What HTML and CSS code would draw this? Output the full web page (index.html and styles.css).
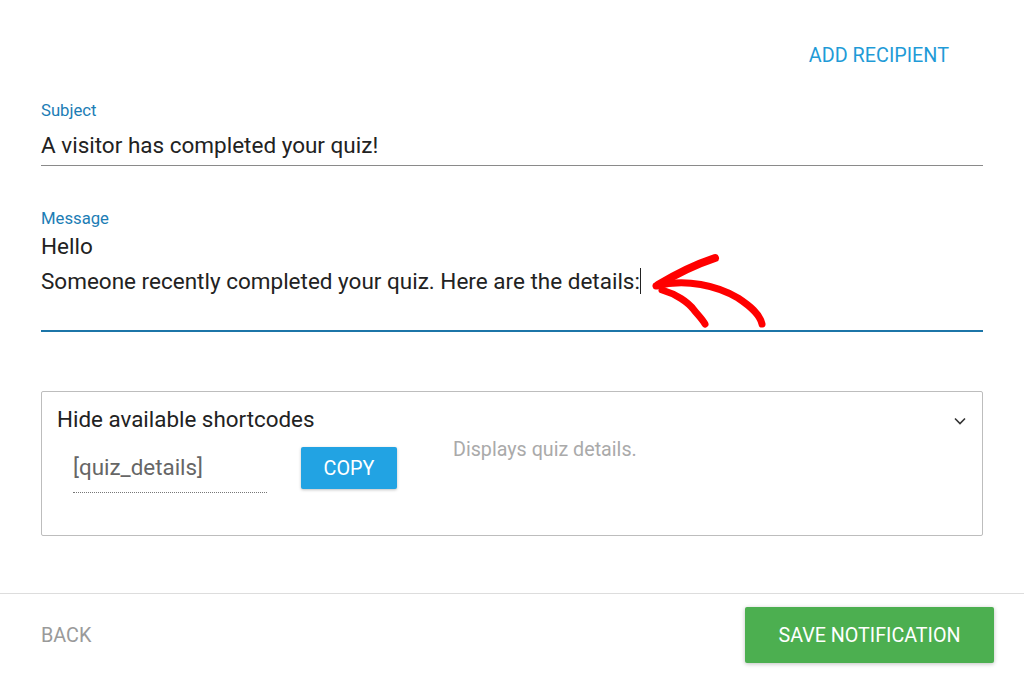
FILE: index.html
```html
<!DOCTYPE html>
<html>
<head>
<meta charset="utf-8">
<link rel="stylesheet" href="styles.css">
</head>
<body>
<div class="page">
  <div class="top-row"><span class="add-recipient">ADD RECIPIENT</span></div>
  <div class="field subject">
    <div class="label">Subject</div>
    <div class="value">A visitor has completed your quiz!</div>
  </div>
  <div class="field message">
    <div class="label">Message</div>
    <div class="value">Hello<br>Someone recently completed your quiz. Here are the details:<span class="caret"></span></div>
    <svg class="arrow" width="140" height="90" viewBox="0 0 140 90">
      <path d="M14 33 C 32 22, 50 13, 71 6" fill="none" stroke="#f00" stroke-width="8" stroke-linecap="round"/>
      <path d="M12 34 C 42 26, 74 34, 94 46 C 106 54, 116 62, 118 72" fill="none" stroke="#f00" stroke-width="7" stroke-linecap="round"/>
      <path d="M18 38 C 32 42, 44 50, 50 58 C 55 64, 59 68, 61 72" fill="none" stroke="#f00" stroke-width="7" stroke-linecap="round"/>
    </svg>
  </div>
  <div class="shortcodes">
    <div class="sc-head">
      <span>Hide available shortcodes</span>
      <svg class="chev" width="12" height="8" viewBox="0 0 12 8"><path d="M1 1.5 L6 6.5 L11 1.5" fill="none" stroke="#333" stroke-width="1.6"/></svg>
    </div>
    <div class="sc-row">
      <div class="sc-code">[quiz_details]</div>
      <button class="copy">COPY</button>
      <div class="sc-desc">Displays quiz details.</div>
    </div>
  </div>
</div>
<div class="footer">
  <span class="back">BACK</span>
  <button class="save">SAVE NOTIFICATION</button>
</div>
</body>
</html>
```
FILE: styles.css
```css
* { box-sizing: border-box; }
html, body { margin: 0; padding: 0; background: #fff; }
body { font-family: Roboto, "Noto Sans", sans-serif; color: #222; width: 1024px; height: 675px; overflow: hidden; }
.page { padding: 0 41px; }
.top-row { display: flex; justify-content: flex-end; padding-top: 45px; padding-right: 34px; height: 100px; }
.add-recipient { color: #1f9bd7; font-size: 19.8px; line-height: 22px; }
.field { position: relative; }
.label { color: #1c7db5; font-size: 16.7px; line-height: 20px; }
.subject .label { padding-top: 1px; }
.subject .value { font-size: 22.5px; line-height: 28px; padding-top: 10px; padding-bottom: 6px; border-bottom: 1px solid #8a8a8a; }
.message { margin-top: 43px; }
.message .value { font-size: 22.5px; line-height: 35px; height: 103px; border-bottom: 2px solid #1c75a8; }
.caret { display: inline-block; width: 1px; height: 26px; background: #222; vertical-align: -5px; }
.arrow { position: absolute; left: 603px; top: 43px; }
.shortcodes { margin-top: 59px; border: 1px solid #bdbdbd; border-radius: 2px; height: 145px; padding: 14px 16px 0 15px; }
.sc-head { display: flex; justify-content: space-between; align-items: center; font-size: 22.4px; line-height: 26px; color: #222; }
.chev { margin-top: 4px; }
.sc-row { display: flex; align-items: flex-start; margin-top: 14px; padding-left: 16px; }
.sc-code { width: 194px; font-size: 22.4px; line-height: 28px; color: #666; padding-top: 7px; height: 47px; border-bottom: 1px dotted #777; }
.copy { margin-left: 34px; margin-top: 1px; width: 96px; height: 42px; background: #22a3e3; color: #fff; border: none; border-radius: 2px; font-family: Roboto, sans-serif; font-size: 19.8px; box-shadow: 0 1px 3px rgba(0,0,0,0.25); padding: 0; }
.sc-desc { margin-left: 56px; font-size: 19.7px; color: #aaa; line-height: 22px; margin-top: -7px; }
.footer { margin-top: 57px; border-top: 1px solid #ddd; display: flex; justify-content: space-between; align-items: center; padding: 13px 30px 0 41px; }
.back { color: #9a9a9a; font-size: 19.8px; }
.save { width: 249px; height: 56px; background: #4caf50; color: #fff; border: none; border-radius: 2px; font-family: Roboto, sans-serif; font-size: 19.7px; box-shadow: 0 1px 4px rgba(0,0,0,0.25); padding: 0; }
```
